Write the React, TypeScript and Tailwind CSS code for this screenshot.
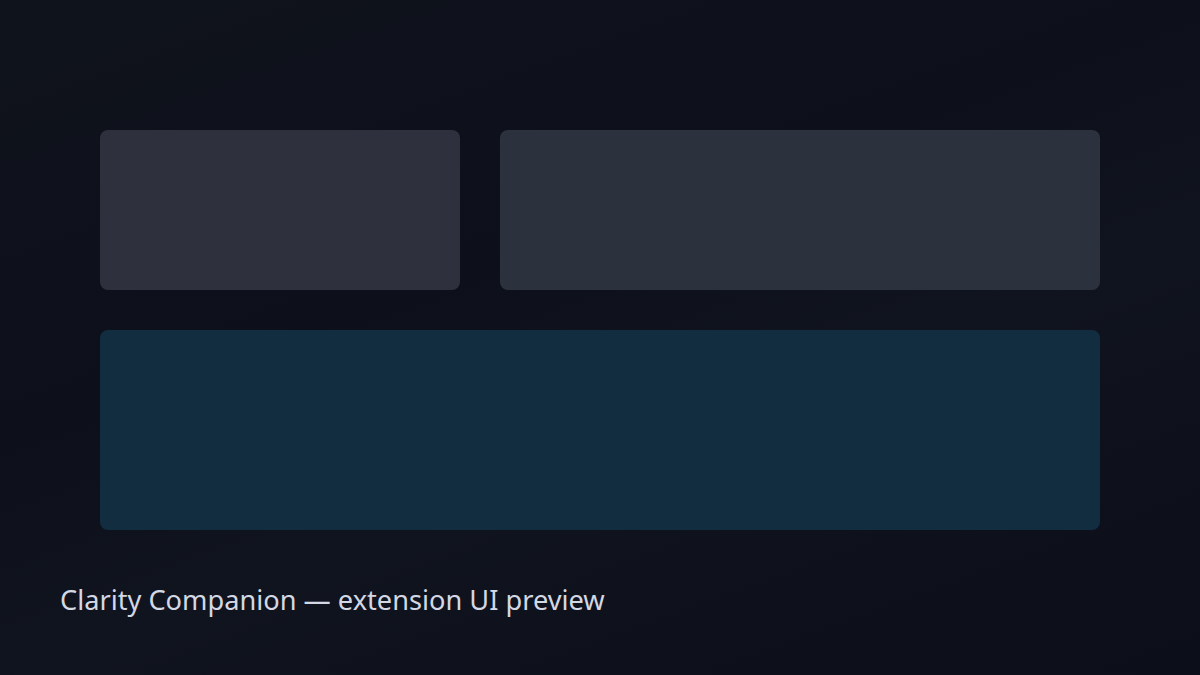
export default function App() {
  return (
    <div
      className="w-[1200px] h-[675px] overflow-hidden bg-[linear-gradient(160deg,#0f131b_0%,#0d101b_40%,#10141f_60%,#0d101b_85%,#0c0f1a_100%)]"
      style={{ fontFamily: '"Noto Sans", "Open Sans", sans-serif' }}
    >
      <div className="px-[100px] pt-[130px] flex flex-col gap-[40px]">
        <div className="flex gap-[40px]">
          <div className="w-[360px] h-[160px] rounded-lg bg-[#2e313d]" />
          <div className="flex-1 h-[160px] rounded-lg bg-[#2c313e]" />
        </div>
        <div className="h-[200px] rounded-lg bg-[#122d40]" />
      </div>
      <div className="pl-[60px] pt-[52px] text-[27.2px] leading-[36px] text-[#d3d8e4]">
        Clarity Companion — extension UI preview
      </div>
    </div>
  );
}
